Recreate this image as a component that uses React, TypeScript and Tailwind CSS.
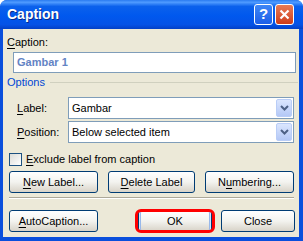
import React from "react";

const font = { fontFamily: '"Liberation Sans", Arial, sans-serif' };

function U({ children }: { children: React.ReactNode }) {
  return <span className="underline underline-offset-[2px]">{children}</span>;
}

function XpButton({
  children,
  className = "",
}: {
  children: React.ReactNode;
  className?: string;
}) {
  return (
    <button
      className={
        "h-[22px] rounded-[3px] border border-[#003c74] bg-gradient-to-b from-[#ffffff] via-[#f3f3ef] to-[#d8d3c8] text-[11px] leading-none text-black " +
        className
      }
    >
      {children}
    </button>
  );
}

function Combo({ value }: { value: string }) {
  return (
    <div className="flex h-[22px] w-[226px] items-center border border-[#7f9db9] bg-white pl-[3px] pr-[1px]">
      <span className="flex-1 text-[11px]">{value}</span>
      <span className="flex h-[18px] w-[16px] items-center justify-center rounded-[2px] border border-[#b9cdf7] bg-gradient-to-b from-[#dbe6fe] to-[#b4c8f6]">
        <svg width="9" height="6" viewBox="0 0 9 6">
          <path d="M1 1 L4.5 4.5 L8 1" fill="none" stroke="#4d6185" strokeWidth="2" />
        </svg>
      </span>
    </div>
  );
}

export default function App() {
  return (
    <div className="flex h-[241px] w-[303px] flex-col overflow-hidden rounded-t-[7px] bg-[#0a4fdc]" style={font}>
      {/* title bar */}
      <div className="flex h-[29px] items-center bg-[linear-gradient(to_bottom,#2a7bf0_0%,#4f9bff_8%,#0b61ec_22%,#0058ee_55%,#0552e6_85%,#0340c6_100%)] pl-[7px] pr-[9px]">
        <span className="flex-1 text-[14px] font-bold text-white [text-shadow:1px_1px_0_#0a2a8a]">
          Caption
        </span>
        <div className="flex gap-[2px]">
          <span className="flex h-[21px] w-[19px] items-center justify-center rounded-[3px] border border-white bg-gradient-to-b from-[#3f86f5] to-[#1d5ee8] text-[15px] font-bold text-white">
            ?
          </span>
          <span className="flex h-[21px] w-[19px] items-center justify-center rounded-[3px] border border-white bg-gradient-to-b from-[#e77a55] to-[#cf3b17]">
            <svg width="11" height="11" viewBox="0 0 11 11">
              <path d="M1.5 1.5 L9.5 9.5 M9.5 1.5 L1.5 9.5" stroke="white" strokeWidth="2.2" />
            </svg>
          </span>
        </div>
      </div>

      {/* body */}
      <div className="mb-[4px] ml-[3px] mr-[4px] flex flex-1 flex-col bg-[#ece9d8] pl-[4px] text-[11px] text-black">
        <div className="mt-[7px] h-[13px] leading-[13px]">
          <U>C</U>aption:
        </div>
        <div className="ml-[6px] mt-[3px] flex h-[21px] w-[283px] items-center border border-[#7f9db9] bg-white pl-[3px] text-[11px] font-bold text-[#6383c4]">
          Gambar 1
        </div>

        <div className="mt-[3px] flex h-[13px] items-center">
          <span className="leading-[13px] text-[#0046d5]">Options</span>
          <div className="ml-[5px] mr-[1px] h-px flex-1 bg-[#d0d0bf]" />
        </div>

        <div className="mt-[8px] flex items-center">
          <span className="ml-[10px] w-[51px]">
            <U>L</U>abel:
          </span>
          <Combo value="Gambar" />
        </div>
        <div className="mt-[2px] flex items-center">
          <span className="ml-[10px] w-[51px]">
            <U>P</U>osition:
          </span>
          <Combo value="Below selected item" />
        </div>

        <div className="mt-[10px] flex items-center">
          <span className="ml-[2px] h-[13px] w-[13px] border border-[#1c5180] bg-gradient-to-br from-[#dcdcd7] to-[#ffffff]" />
          <span className="ml-[4px] leading-[13px]">
            <U>E</U>xclude label from caption
          </span>
        </div>

        <div className="ml-[2px] mt-[5px] flex">
          <XpButton className="w-[89px]">
            <U>N</U>ew Label...
          </XpButton>
          <XpButton className="ml-[10px] w-[87px]">
            <U>D</U>elete Label
          </XpButton>
          <XpButton className="ml-[10px] w-[89px]">
            N<U>u</U>mbering...
          </XpButton>
        </div>

        <div className="ml-[2px] mt-[4px] w-[285px] border-t border-b border-t-[#aca899] border-b-white" />

        <div className="ml-[2px] mt-[11px] flex">
          <XpButton className="w-[89px]">
            <U>A</U>utoCaption...
          </XpButton>
          <div className="relative ml-[40px]">
            <XpButton className="w-[74px] shadow-[inset_0_0_0_1px_#cee7ff,inset_2px_0_0_#98b8ea,inset_-2px_0_0_#98b8ea]">OK</XpButton>
            <div className="absolute -inset-x-[3px] -inset-y-[1px] rounded-[6px] border-[3px] border-[#ff0000]" />
          </div>
          <XpButton className="ml-[9px] w-[74px]">Close</XpButton>
        </div>
      </div>
    </div>
  );
}
